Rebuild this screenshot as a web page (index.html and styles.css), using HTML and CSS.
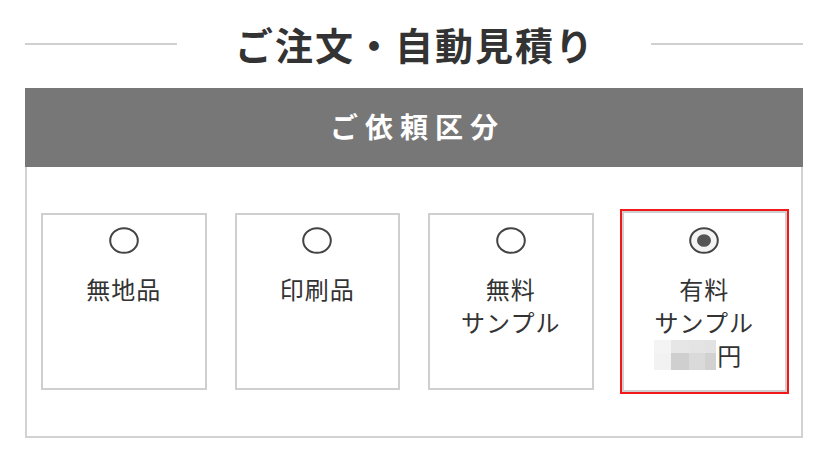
FILE: index.html
```html
<!DOCTYPE html>
<html lang="ja">
<head>
	<meta charset="UTF-8">
	<meta name="viewport" content="width=device-width, initial-scale=1">
	<title>ご注文・自動見積り</title>
	<link rel="stylesheet" href="styles.css">
</head>
<body>
	<div class="main">
		<h1 class="page-title"><span class="rule"></span><span class="title-text">ご注文・自動見積り</span><span class="rule"></span></h1>

		<section class="panel">
			<h2 class="panel-head">ご依頼区分</h2>
			<div class="panel-body">
				<label class="choice">
					<svg class="radio" viewBox="0 0 30 27"><ellipse cx="15" cy="13.5" rx="13.8" ry="12.3" fill="none" stroke="#444" stroke-width="2"/></svg>
					<span class="choice-text">無地品</span>
				</label>
				<label class="choice">
					<svg class="radio" viewBox="0 0 30 27"><ellipse cx="15" cy="13.5" rx="13.8" ry="12.3" fill="none" stroke="#444" stroke-width="2"/></svg>
					<span class="choice-text">印刷品</span>
				</label>
				<label class="choice">
					<svg class="radio" viewBox="0 0 30 27"><ellipse cx="15" cy="13.5" rx="13.8" ry="12.3" fill="none" stroke="#444" stroke-width="2"/></svg>
					<span class="choice-text">無料<br>サンプル</span>
				</label>
				<label class="choice is-active">
					<svg class="radio" viewBox="0 0 30 27"><ellipse cx="15" cy="13.5" rx="13.8" ry="12.3" fill="#f4f4f4" stroke="#444" stroke-width="2"/><ellipse cx="15" cy="13.5" rx="7" ry="6.3" fill="#555"/></svg>
					<span class="choice-text">有料<br>サンプル<br><span class="price"><span class="blur"><i class="b1"></i><i class="b2"></i><i class="b3"></i><i class="b4"></i><i class="b5"></i><i class="b6"></i><i class="b7"></i><i class="b8"></i></span>円</span></span>
				</label>
			</div>
		</section>
	</div>
</body>
</html>
```

FILE: styles.css
```css
*{padding: 0;margin: 0;}
*,*:after,*:before{box-sizing:border-box;}
html,body{width: 100%;background: #fff;}
body{font-family: "Noto Sans CJK JP", "Noto Sans", sans-serif;color: #333;}
.main{padding: 0 25px;}

.page-title{
	height: 88px;
	display: flex;
	align-items: center;
	gap: 56px;
	font-size: 38px;
	font-weight: bold;
	letter-spacing: 2px;
	color: #333;
}
.page-title .rule{flex: 1;height: 2px;background: #d0d0d0;}
.title-text{line-height: 1;padding-left: 2px;}

.panel{border: 2px solid #d2d2d2;border-top: 0;}
.panel-head{
	height: 79px;
	margin: 0 -2px;
	background: #777;
	color: #fff;
	font-size: 28px;
	font-weight: bold;
	letter-spacing: 7px;
	padding-left: 7px;
	display: flex;
	align-items: center;
	justify-content: center;
	padding-bottom: 4px;
}
.panel-body{
	display: grid;
	grid-template-columns: repeat(4, 1fr);
	gap: 28px;
	align-items: center;
	padding: 44px 14px 44px;
}

.choice{
	height: 177px;
	border: 2px solid #cfcfcf;
	padding-top: 12px;
	text-align: center;
	display: block;
}
.choice.is-active{
	height: 181px;
	outline: 2px solid #f01818;
	padding-top: 14px;
}
.radio{display: block;width: 30px;height: 27px;margin: 0 auto;}
.choice-text{
	display: block;
	margin-top: 18px;
	font-size: 24px;
	line-height: 33px;
	letter-spacing: 1px;
	color: #333;
}
.price{
	display: inline-flex;
	align-items: center;
	height: 33px;
	vertical-align: top;
	margin-left: -12px;
}
.blur{
	display: inline-grid;
	grid-template-columns: 17px 18px 16px 11px;
	grid-template-rows: 13px 17px;
	width: 62px;
	height: 30px;
	margin-right: 1px;
}
.blur i{display: block;}
.b1{background: #f4f4f4;}
.b2{background: #e6e6e6;}
.b3{background: #e4e4e4;}
.b4{background: #e2e2e2;}
.b5{background: #f2f2f2;}
.b6{background: #cfcfcf;}
.b7{background: #dadada;}
.b8{background: #d1d1d1;}
```
